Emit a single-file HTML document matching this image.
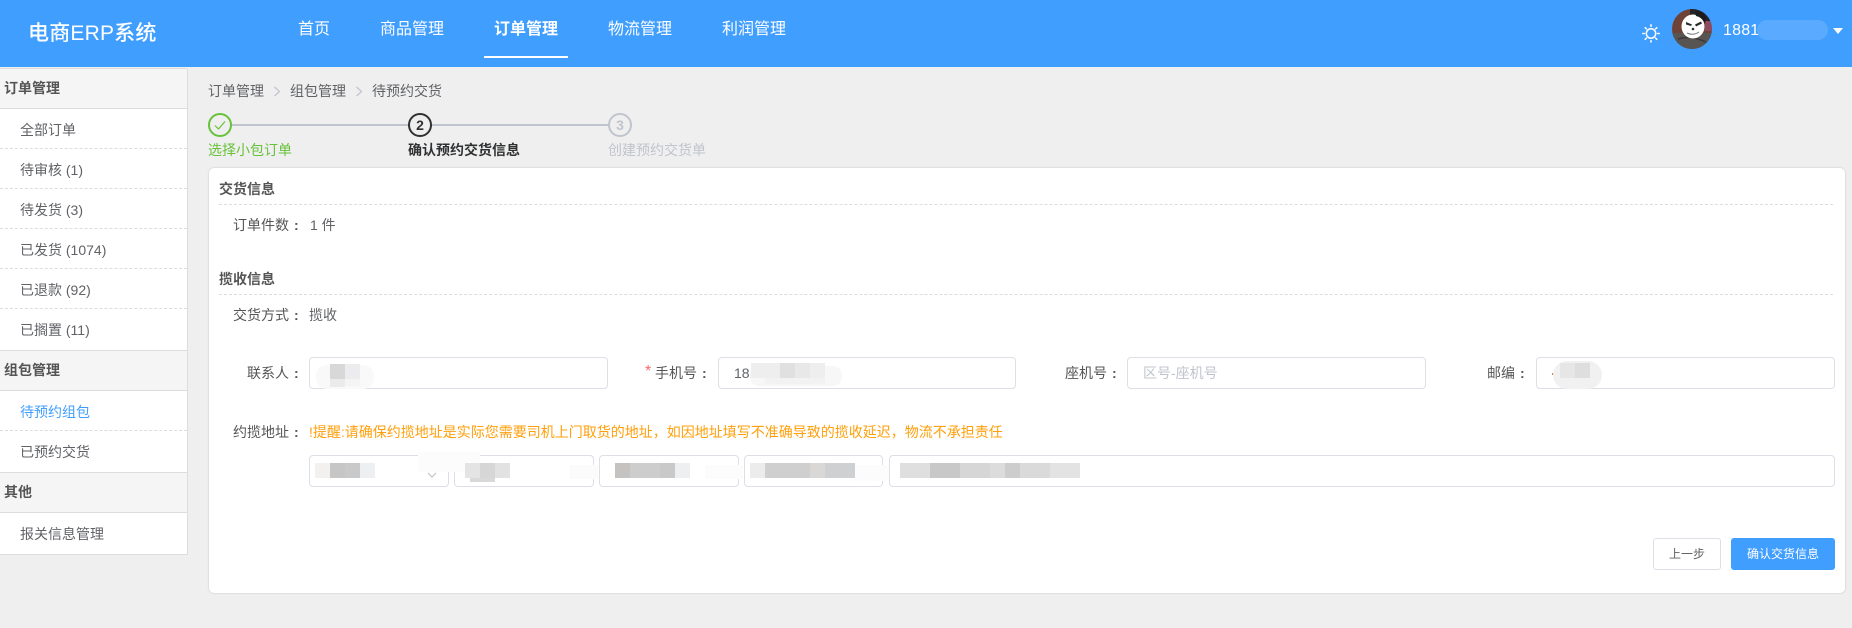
<!DOCTYPE html>
<html lang="zh"><head><meta charset="utf-8"><title>电商ERP系统</title>
<style>
*{box-sizing:border-box}
html,body{margin:0;padding:0}
body{width:1852px;height:628px;position:relative;overflow:hidden;background:#efefef;font-family:"Liberation Sans","Noto Sans CJK SC",sans-serif;font-size:14px;color:#606266}
.t{position:absolute;white-space:nowrap;line-height:20px;height:20px}
.a{position:absolute}
.head{left:0;top:0;width:1852px;height:67px;background:#409eff}
.w{color:#fff}
.nav{font-size:16px;color:#fff;top:20px}
.side{left:0;top:69px;width:188px;height:486px;background:#fff;border-right:1px solid #ddd;border-bottom:1px solid #ddd}
.g{left:0;width:187px;height:41px;background:#f5f5f5;border-bottom:1px solid #ddd;border-top:1px solid #ddd;font-weight:700;color:#555;line-height:39px;padding-left:4px;white-space:nowrap}
.i{left:0;width:187px;height:40px;border-bottom:1px dashed #ddd;line-height:43px;padding-left:20px;color:#606266;white-space:nowrap}
.card{left:209px;top:168px;width:1636px;height:425px;background:#fff;border-radius:5px;box-shadow:0 0 2px rgba(0,0,0,.18)}
.b{font-weight:700;color:#555}
.l{color:#555}
.l i{font-style:normal;font-weight:700;margin-left:5px}
.dash{left:219px;width:1614px;height:0;border-top:1px dashed #ddd}
.in{background:#fff;border:1px solid #dcdfe6;border-radius:4px;height:32px}
.m{position:absolute}
.sl{font-weight:700;color:#303133}
</style></head><body>
<div class="a head"></div>
<div class="t w" style="left:28px;top:24px;font-size:21px;font-weight:500;letter-spacing:.2px">电商ERP系统</div>
<div class="t nav" style="left:298px">首页</div>
<div class="t nav" style="left:380px">商品管理</div>
<div class="t nav" style="left:494px;font-weight:700">订单管理</div>
<div class="a" style="left:484px;top:56px;width:84px;height:2px;background:#fff"></div>
<div class="t nav" style="left:608px">物流管理</div>
<div class="t nav" style="left:722px">利润管理</div>
<svg class="a" style="left:1641px;top:23px" width="20" height="20" viewBox="0 0 20 20" fill="none" stroke="#fff" stroke-width="1.500" stroke-linecap="round"><circle cx="10" cy="10.500" r="4.700"/><path d="M10 1.800v1.600M10 17.600v1.400M1.800 10.500h1.600M16.600 10.500h1.600M4.200 4.700l1.200 1.200M14.600 15.100l1.200 1.200M4.200 16.300l1.200-1.200M14.600 5.900l1.200-1.200"/></svg>
<svg class="a" style="left:1672px;top:9px" width="40" height="40" viewBox="0 0 40 40"><defs><clipPath id="c"><circle cx="20" cy="20" r="20"/></clipPath></defs><g clip-path="url(#c)"><rect width="40" height="40" fill="#6e4237"/><rect x="33" y="4" width="7" height="18" fill="#8d4a62"/><path d="M18 0h22v12H18z" fill="#24242a"/><rect y="24" width="40" height="16" fill="#575452"/><path d="M6 30Q18 26 34 33" stroke="#3c3a39" stroke-width="1.500" fill="none"/><ellipse cx="21" cy="17.500" rx="11.500" ry="12" fill="#fff"/><path d="M23 3Q30 1 34 8L33 15Q30 8 24 7Z" fill="#1c1c1f"/><path d="M14 13l6 2.500-1 1.500-5-1.500zM23 15.500l6-3 1 2-6 3z" fill="#2a2a2a"/><circle cx="21" cy="20" r="1.300" fill="#333"/><path d="M15 24Q21 27 27 23" stroke="#777" fill="none"/></g></svg>
<div class="t w" style="left:1723px;top:21px;font-size:16px;letter-spacing:.2px">1881</div>
<div class="a" style="left:1757px;top:20px;width:71px;height:20px;background:#5aabff;border-radius:10px"></div>
<div class="a" style="left:1833px;top:28px;width:0;height:0;border-left:5px solid transparent;border-right:5px solid transparent;border-top:6px solid #fff"></div>

<div class="a side"></div>
<div class="a g" style="top:68px">订单管理</div>
<div class="a i" style="top:109px">全部订单</div>
<div class="a i" style="top:149px">待审核 (1)</div>
<div class="a i" style="top:189px">待发货 (3)</div>
<div class="a i" style="top:229px">已发货 (1074)</div>
<div class="a i" style="top:269px">已退款 (92)</div>
<div class="a i" style="top:309px;border-bottom:0">已搁置 (11)</div>
<div class="a g" style="top:350px">组包管理</div>
<div class="a i" style="top:391px;color:#409eff">待预约组包</div>
<div class="a i" style="top:431px;border-bottom:0">已预约交货</div>
<div class="a g" style="top:472px">其他</div>
<div class="a i" style="top:513px;border-bottom:0">报关信息管理</div>

<div class="t" style="left:208px;top:81px">订单管理</div>
<svg class="a" style="left:273px;top:86px" width="8" height="11" viewBox="0 0 8 11" fill="none" stroke="#c0c4cc" stroke-width="1.200"><path d="M1.500 1l5 4.500-5 4.500"/></svg>
<div class="t" style="left:290px;top:81px">组包管理</div>
<svg class="a" style="left:355px;top:86px" width="8" height="11" viewBox="0 0 8 11" fill="none" stroke="#c0c4cc" stroke-width="1.200"><path d="M1.500 1l5 4.500-5 4.500"/></svg>
<div class="t" style="left:372px;top:81px">待预约交货</div>

<div class="a" style="left:230px;top:124px;width:380px;height:2px;background:#c0c4cc"></div>
<div class="a" style="left:208px;top:113px;width:24px;height:24px;border-radius:50%;border:2px solid #67c23a;background:#efefef"></div>
<svg class="a" style="left:213px;top:118px" width="14" height="14" viewBox="0 0 14 14" fill="none" stroke="#67c23a" stroke-width="1.200"><path d="M2 7.500l3.500 3.500 6.500-7.500"/></svg>
<div class="a" style="left:408px;top:113px;width:24px;height:24px;border-radius:50%;border:2px solid #303133;background:#efefef;text-align:center;line-height:20px;font-weight:700;color:#303133;font-size:14px">2</div>
<div class="a" style="left:608px;top:113px;width:24px;height:24px;border-radius:50%;border:2px solid #c0c4cc;background:#efefef;text-align:center;line-height:20px;font-weight:700;color:#c0c4cc;font-size:14px">3</div>
<div class="t" style="left:208px;top:140px;color:#67c23a">选择小包订单</div>
<div class="t sl" style="left:408px;top:140px">确认预约交货信息</div>
<div class="t" style="left:608px;top:140px;color:#c0c4cc">创建预约交货单</div>

<div class="a card"></div>
<div class="t b" style="left:219px;top:179px">交货信息</div>
<div class="a dash" style="top:204px"></div>
<div class="t l" style="left:233px;top:215px">订单件数<i>:</i></div>
<div class="t" style="left:310px;top:215px">1 件</div>
<div class="t b" style="left:219px;top:269px">揽收信息</div>
<div class="a dash" style="top:294px"></div>
<div class="t l" style="left:233px;top:305px">交货方式<i>:</i></div>
<div class="t" style="left:309px;top:305px">揽收</div>

<div class="t l" style="left:247px;top:363px">联系人<i>:</i></div>
<div class="a in" style="left:309px;top:357px;width:299px"></div>
<div class="m" style="left:316px;top:365px;width:58px;height:24px;background:#f9f9f9;border-radius:11px"></div>
<div class="m" style="left:330px;top:364px;width:15px;height:15px;background:#d8d8d8"></div>
<div class="m" style="left:345px;top:364px;width:15px;height:15px;background:#ececee"></div>
<div class="m" style="left:330px;top:379px;width:15px;height:8px;background:#ebebeb"></div>
<div class="m" style="left:345px;top:379px;width:15px;height:7px;background:#f4f4f4"></div>

<div class="t" style="left:645px;top:362px;color:#f56c6c;font-size:16px">*</div>
<div class="t l" style="left:655px;top:363px">手机号<i>:</i></div>
<div class="a in" style="left:718px;top:357px;width:298px"></div>
<div class="t" style="left:734px;top:363px">18</div>
<div class="m" style="left:750px;top:366px;width:92px;height:20px;background:#f7f7f7;border-radius:9px"></div>
<div class="m" style="left:751px;top:363px;width:29px;height:15px;background:#eeeeee"></div>
<div class="m" style="left:780px;top:363px;width:15px;height:15px;background:#e0e0e0"></div>
<div class="m" style="left:795px;top:363px;width:15px;height:15px;background:#e8e8e8"></div>
<div class="m" style="left:810px;top:363px;width:15px;height:15px;background:#eeeeee"></div>
<div class="m" style="left:765px;top:378px;width:60px;height:6px;background:#f2f2f2"></div>

<div class="t l" style="left:1065px;top:363px">座机号<i>:</i></div>
<div class="a in" style="left:1127px;top:357px;width:299px"></div>
<div class="t" style="left:1143px;top:363px;color:#c0c4cc">区号-座机号</div>

<div class="t l" style="left:1487px;top:363px">邮编<i>:</i></div>
<div class="a in" style="left:1536px;top:357px;width:299px"></div>
<div class="m" style="left:1552px;top:373px;width:2px;height:2px;background:#c98a5a"></div>
<div class="m" style="left:1553px;top:361px;width:49px;height:28px;background:#f1f1f1;border-radius:14px"></div>
<div class="m" style="left:1560px;top:363px;width:15px;height:15px;background:#e6e6e6"></div>
<div class="m" style="left:1575px;top:363px;width:15px;height:15px;background:#dedede"></div>

<div class="t l" style="left:233px;top:422px">约揽地址<i>:</i></div>
<div class="t" style="left:309px;top:422px;color:#ff9f0a">!提醒:请确保约揽地址是实际您需要司机上门取货的地址，如因地址填写不准确导致的揽收延迟，物流不承担责任</div>

<div class="a in" style="left:309px;top:455px;width:140px"></div>
<div class="a in" style="left:454px;top:455px;width:140px"></div>
<div class="a in" style="left:599px;top:455px;width:140px"></div>
<div class="a in" style="left:744px;top:455px;width:139px"></div>
<div class="a in" style="left:889px;top:455px;width:946px"></div>
<div class="m" style="left:418px;top:452px;width:62px;height:20px;background:#fcfcfc"></div>
<svg class="a" style="left:427px;top:472px" width="10" height="7" viewBox="0 0 10 7" fill="none" stroke="#c0c4cc" stroke-width="1.200"><path d="M1 1l4 4 4-4"/></svg>
<div class="m" style="left:570px;top:465px;width:28px;height:14px;background:#fbfbfb"></div>
<div class="m" style="left:705px;top:465px;width:38px;height:14px;background:#fcfcfc"></div>
<div class="m" style="left:855px;top:465px;width:34px;height:16px;background:#fcfcfc"></div>

<div class="m" style="left:315px;top:463px;width:15px;height:15px;background:#f2f1f0"></div>
<div class="m" style="left:330px;top:463px;width:15px;height:15px;background:#c6c6c6"></div>
<div class="m" style="left:345px;top:463px;width:15px;height:15px;background:#c9c9c9"></div>
<div class="m" style="left:360px;top:463px;width:15px;height:15px;background:#eeeff1"></div>

<div class="m" style="left:465px;top:463px;width:15px;height:15px;background:#e4e4e4"></div>
<div class="m" style="left:480px;top:463px;width:15px;height:15px;background:#d6d6d6"></div>
<div class="m" style="left:495px;top:463px;width:15px;height:15px;background:#e2e2e2"></div>
<div class="m" style="left:470px;top:478px;width:25px;height:4px;background:#d9d9d9"></div>

<div class="m" style="left:615px;top:463px;width:15px;height:15px;background:#c4c3c2"></div>
<div class="m" style="left:630px;top:463px;width:30px;height:15px;background:#cdcdce"></div>
<div class="m" style="left:660px;top:463px;width:15px;height:15px;background:#c9c9c9"></div>
<div class="m" style="left:675px;top:463px;width:15px;height:15px;background:#eeeff1"></div>

<div class="m" style="left:750px;top:463px;width:15px;height:15px;background:#ececec"></div>
<div class="m" style="left:765px;top:463px;width:45px;height:15px;background:#cfcfcf"></div>
<div class="m" style="left:810px;top:463px;width:15px;height:15px;background:#d9d8d6"></div>
<div class="m" style="left:825px;top:463px;width:30px;height:15px;background:#cfd0d2"></div>

<div class="m" style="left:900px;top:463px;width:30px;height:15px;background:#dfdfe0"></div>
<div class="m" style="left:930px;top:463px;width:30px;height:15px;background:#c8c8c8"></div>
<div class="m" style="left:960px;top:463px;width:30px;height:15px;background:#d6d6d6"></div>
<div class="m" style="left:990px;top:463px;width:15px;height:15px;background:#dcdcdc"></div>
<div class="m" style="left:1005px;top:463px;width:15px;height:15px;background:#cdcdcd"></div>
<div class="m" style="left:1020px;top:463px;width:30px;height:15px;background:#dadada"></div>
<div class="m" style="left:1050px;top:463px;width:30px;height:15px;background:#e3e3e4"></div>

<div class="a" style="left:1653px;top:538px;width:68px;height:32px;border:1px solid #dcdfe6;border-radius:3px;background:#fff;text-align:center;line-height:30px;font-size:12px;color:#606266">上一步</div>
<div class="a" style="left:1731px;top:538px;width:104px;height:32px;border-radius:3px;background:#409eff;text-align:center;line-height:32px;font-size:12px;color:#fff">确认交货信息</div>
</body></html>
